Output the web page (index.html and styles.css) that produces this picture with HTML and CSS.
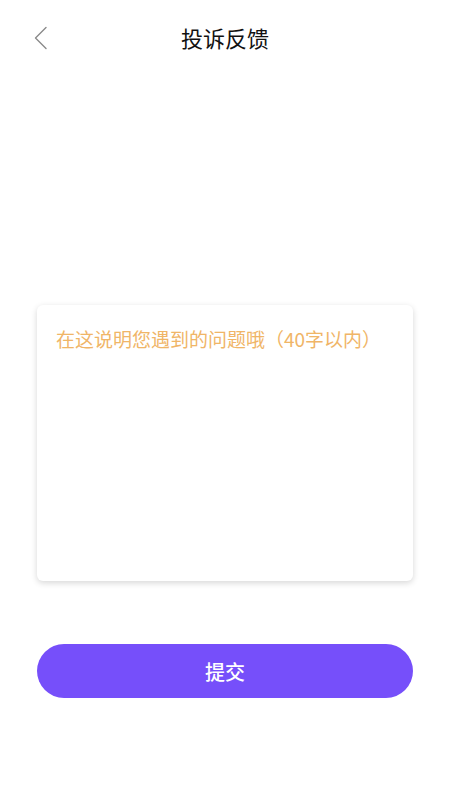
FILE: index.html
```html
<!DOCTYPE html>
<html lang="zh">
<head>
<meta charset="utf-8">
<title>投诉反馈</title>
<link rel="stylesheet" href="styles.css">
</head>
<body>
<div class="page">
  <header class="nav">
    <a class="back" aria-label="返回">
      <svg width="14" height="24" viewBox="0 0 14 24"><path d="M12 1.5 L1.5 12 L12 22.5" fill="none" stroke="#8a8a8a" stroke-width="1.4" stroke-linecap="round" stroke-linejoin="round"/></svg>
    </a>
    <h1 class="title">投诉反馈</h1>
  </header>
  <main class="content">
    <div class="card">
      <textarea class="input" maxlength="40" placeholder="在这说明您遇到的问题哦（40字以内）"></textarea>
    </div>
    <button class="submit" type="button">提交</button>
  </main>
</div>
</body>
</html>
```
FILE: styles.css
```css
* { box-sizing: border-box; }
html, body {
  margin: 0;
  padding: 0;
  background: #ffffff;
  font-family: "Noto Sans CJK SC", "Noto Sans", sans-serif;
}
.page {
  width: 450px;
  min-height: 800px;
}
.nav {
  position: relative;
  height: 78px;
  display: flex;
  align-items: center;
  justify-content: center;
}
.back {
  position: absolute;
  left: 34px;
  top: 26px;
  width: 14px;
  height: 24px;
  display: block;
}
.back svg { display: block; }
.title {
  margin: 0 0 4px;
  font-size: 22px;
  font-weight: 400;
  color: #111111;
  line-height: 30px;
}
.content {
  padding: 0 37px;
  display: flex;
  flex-direction: column;
}
.card {
  margin-top: 227px;
  height: 276px;
  background: #ffffff;
  border-radius: 6px;
  box-shadow: 0 2px 6px rgba(0, 0, 0, 0.16);
  padding: 20px 19px;
}
.input {
  display: block;
  width: 100%;
  height: 100%;
  border: none;
  outline: none;
  resize: none;
  padding: 0;
  background: transparent;
  font-family: "Noto Sans CJK SC", "Noto Sans", sans-serif;
  font-size: 19px;
  line-height: 28px;
  color: #333333;
}
.input::placeholder {
  color: #f0b567;
  opacity: 1;
}
.submit {
  margin-top: 63px;
  height: 54px;
  border: none;
  border-radius: 27px;
  background: #764ffa;
  color: #ffffff;
  font-family: "Noto Sans CJK SC", "Noto Sans", sans-serif;
  font-size: 20px;
  font-weight: 500;
  padding: 0;
}
```
